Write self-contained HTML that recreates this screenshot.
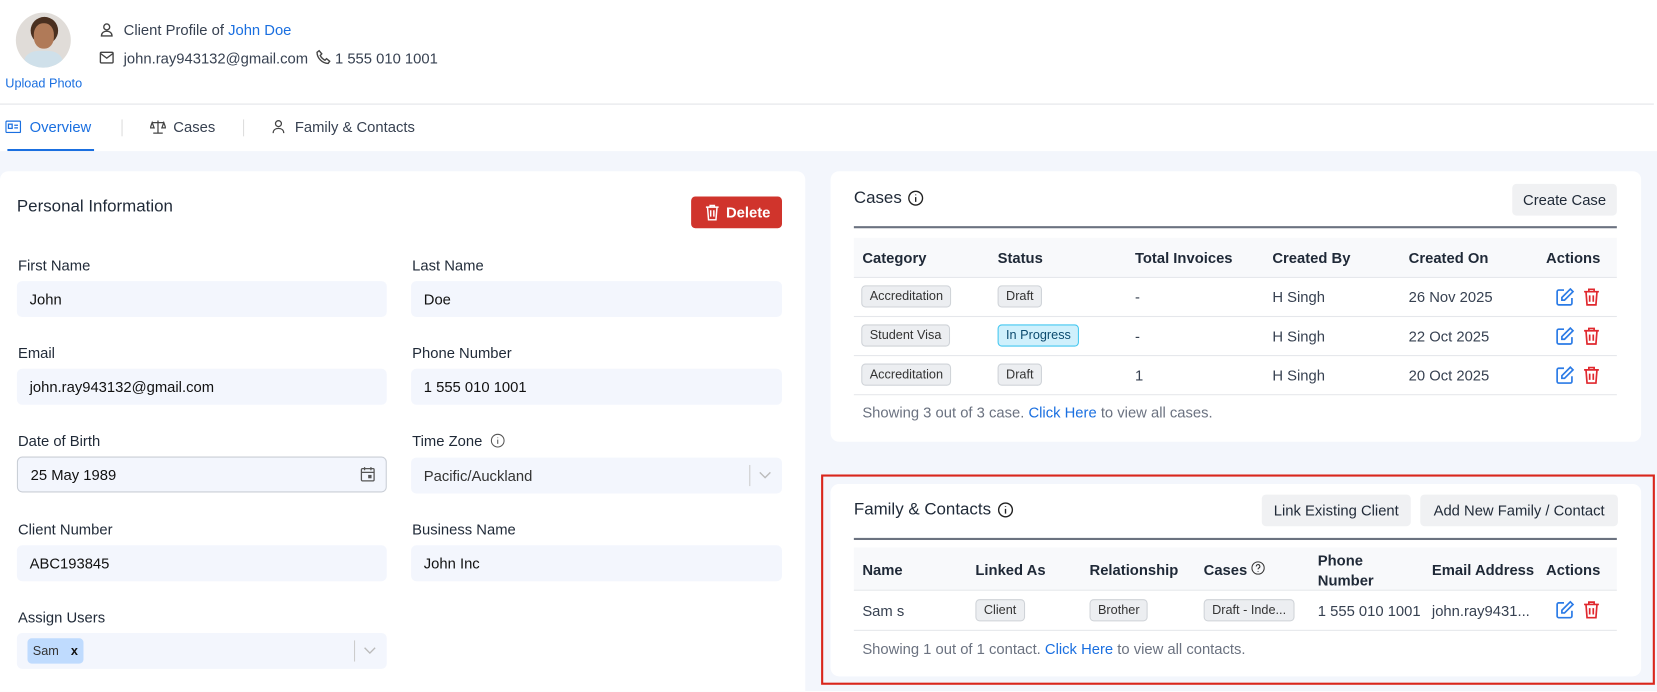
<!DOCTYPE html>
<html><head><meta charset="utf-8"><style>
*{box-sizing:border-box;margin:0;padding:0}
html,body{width:1657px;height:692px;overflow:hidden;background:#fff}
#root{position:absolute;left:0;top:0;width:1568px;height:654px;overflow:hidden;transform:scale(1.05676);transform-origin:0 0;font-family:"Liberation Sans",sans-serif;color:#1f2937;font-size:14px}
.abs{position:absolute}
.bg{position:absolute;left:0;top:143px;width:1568px;height:520px;background:#f3f6fc}
.card{position:absolute;background:#fff;border-radius:8px}
.lbl{position:absolute;font-size:14px;color:#1f2937}
.inp{position:absolute;width:350px;height:34px;background:#f3f6fd;border-radius:5px;font-size:14px;padding:0 12px;line-height:34px;color:#111}
.btn{position:absolute;background:#f0f1f3;border-radius:4px;font-size:14px;color:#1f2937;text-align:center}
.th{position:absolute;font-size:14px;font-weight:bold;color:#1f2937}
.td{position:absolute;font-size:14px;color:#374151}
.tag{position:absolute;font-size:12px;background:#eceef1;border:1px solid #cfd3d8;border-radius:4px;padding:0 7px;height:21px;line-height:19px;color:#333}
.hr{position:absolute;height:1px;background:#e5e7eb}
a{color:#1a6fe0;text-decoration:none}
</style></head><body><div id="root">
<div class="abs" style="left:15px;top:12px;width:52px;height:52px;border-radius:50%;background:#e0dcd8;overflow:hidden">
<div class="abs" style="left:14px;top:4px;width:26px;height:26px;border-radius:50%;background:#4a3020"></div>
<div class="abs" style="left:17px;top:10px;width:19px;height:24px;border-radius:45%;background:#b07a58"></div>
<div class="abs" style="left:8px;top:36px;width:36px;height:24px;border-radius:40%;background:#cfe0ea"></div>
</div>
<div class="abs" style="left:5px;top:72px;font-size:12px;color:#1a6fe0">Upload Photo</div>
<svg class="abs" style="left:94px;top:21px" width="14" height="14" viewBox="0 0 14 14" fill="none" stroke="#444" stroke-width="1.3"><circle cx="7" cy="4.5" r="2.8"/><path d="M2 13c0-3 2.3-4.5 5-4.5s5 1.5 5 4.5z"/></svg>
<div class="abs" style="left:117px;top:20px;font-size:14px;color:#374151">Client Profile of <a>John Doe</a></div>
<svg class="abs" style="left:94px;top:48px" width="14" height="13" viewBox="0 0 14 13" fill="none" stroke="#444" stroke-width="1.3"><rect x="1" y="1.5" width="12" height="10" rx="1"/><path d="M1 2.5l6 4.5 6-4.5"/></svg>
<div class="abs" style="left:117px;top:47px;font-size:14px;color:#374151">john.ray943132@gmail.com</div>
<svg class="abs" style="left:299px;top:47px" width="14" height="14" viewBox="0 0 14 14" fill="none" stroke="#444" stroke-width="1.3"><path d="M3 1l2.5 3-1.5 1.5c1 2 2.5 3.5 4.5 4.5L10 8.5l3 2.5-1.5 2C6 13 1 8 1 2.5z"/></svg>
<div class="abs" style="left:317px;top:47px;font-size:14px;color:#374151">1 555 010 1001</div>
<div class="hr" style="left:0;top:98px;width:1565px;background:#e2e4e8"></div>
<svg class="abs" style="left:5px;top:114px" width="15" height="12" viewBox="0 0 15 12" fill="none" stroke="#1a6fe0" stroke-width="1.2"><rect x="0.6" y="0.6" width="13.8" height="10.8" rx="1"/><rect x="3" y="3.5" width="3.5" height="4"/><path d="M8.5 4.5h3.5M8.5 7h3.5"/></svg>
<div class="abs" style="left:28px;top:112px;font-size:14px;color:#1a6fe0">Overview</div>
<div class="abs" style="left:7px;top:141px;width:82px;height:2px;background:#1a6fe0"></div>
<div class="abs" style="left:115px;top:113px;width:1px;height:16px;background:#ddd"></div>
<svg class="abs" style="left:142px;top:113px" width="15" height="14" viewBox="0 0 15 14" fill="none" stroke="#444" stroke-width="1.2"><path d="M7.5 1v12M3 13h9M2 3h11M2 3l-1.8 5h3.6zM13 3l-1.8 5h3.6z"/></svg>
<div class="abs" style="left:164px;top:112px;font-size:14px;color:#374151">Cases</div>
<div class="abs" style="left:230px;top:113px;width:1px;height:16px;background:#ddd"></div>
<svg class="abs" style="left:257px;top:113px" width="13" height="14" viewBox="0 0 13 14" fill="none" stroke="#444" stroke-width="1.2"><circle cx="6.5" cy="4" r="2.8"/><path d="M1.5 13c0-3 2.2-4.5 5-4.5s5 1.5 5 4.5"/></svg>
<div class="abs" style="left:279px;top:112px;font-size:14px;color:#374151">Family &amp; Contacts</div>
<div class="bg"></div>
<div class="card" style="left:0;top:162px;width:762px;height:520px"></div>
<div class="abs" style="left:16px;top:187px;font-size:16px;color:#1f2937">Personal Information</div>
<div class="abs" style="left:654px;top:186px;width:86px;height:30px;background:#d0342c;border-radius:4px;color:#fff;font-weight:bold;font-size:14px;line-height:30px;padding-left:33px">Delete</div>
<svg class="abs" style="left:667px;top:193px" width="14" height="16" viewBox="0 0 14 16" fill="none" stroke="#fff" stroke-width="1.4"><path d="M1 3h12M5 3V1.5h4V3M2.5 3l1 12h7l1-12M5.5 6v6M8.5 6v6"/></svg>
<div class="lbl" style="left:17px;top:243px">First Name</div><div class="inp" style="left:16px;top:266px">John</div>
<div class="lbl" style="left:390px;top:243px">Last Name</div><div class="inp" style="left:389px;top:266px;width:351px">Doe</div>
<div class="lbl" style="left:17px;top:326px">Email</div><div class="inp" style="left:16px;top:349px">john.ray943132@gmail.com</div>
<div class="lbl" style="left:390px;top:326px">Phone Number</div><div class="inp" style="left:389px;top:349px;width:351px">1 555 010 1001</div>
<div class="lbl" style="left:17px;top:409px">Date of Birth</div><div class="inp" style="left:16px;top:432px;border:1px solid #c9ced6;line-height:32px">25 May 1989</div>
<svg class="abs" style="left:341px;top:441px" width="14" height="15" viewBox="0 0 14 15" fill="none" stroke="#555" stroke-width="1.2"><rect x="1" y="2.5" width="12" height="11.5" rx="1"/><path d="M1 6h12M4 1v3M10 1v3"/><rect x="8" y="9" width="2" height="2" fill="#555"/></svg>
<div class="lbl" style="left:390px;top:409px">Time Zone</div>
<svg class="abs" style="left:464px;top:410px" width="14" height="14" viewBox="0 0 14 14" fill="none" stroke="#555" stroke-width="1"><circle cx="7" cy="7" r="6"/><path d="M7 6v4M7 4v0.6"/></svg>
<div class="inp" style="left:389px;top:433px;width:351px;color:#333">Pacific/Auckland</div>
<div class="abs" style="left:709px;top:440px;width:1px;height:20px;background:#ccc"></div>
<svg class="abs" style="left:718px;top:446px" width="12" height="8" viewBox="0 0 12 8" fill="none" stroke="#bbb" stroke-width="1.3"><path d="M1 1l5 5 5-5"/></svg>
<div class="lbl" style="left:17px;top:493px">Client Number</div><div class="inp" style="left:16px;top:516px">ABC193845</div>
<div class="lbl" style="left:390px;top:493px">Business Name</div><div class="inp" style="left:389px;top:516px;width:351px">John Inc</div>
<div class="lbl" style="left:17px;top:576px">Assign Users</div><div class="inp" style="left:16px;top:599px"></div>
<div class="abs" style="left:26px;top:604px;width:53px;height:24px;background:#bfdbfe;border-radius:4px;font-size:12px;line-height:24px;padding-left:5px;color:#333">Sam <b style="margin-left:8px;color:#111">x</b></div>
<div class="abs" style="left:335px;top:606px;width:1px;height:20px;background:#ccc"></div>
<svg class="abs" style="left:344px;top:612px" width="12" height="8" viewBox="0 0 12 8" fill="none" stroke="#bbb" stroke-width="1.3"><path d="M1 1l5 5 5-5"/></svg>

<div class="card" style="left:786px;top:162px;width:767px;height:256px"></div>
<div class="abs" style="left:808px;top:179px;font-size:16px">Cases</div>
<svg class="abs" style="left:859px;top:180px" width="15" height="15" viewBox="0 0 15 15" fill="none" stroke="#222" stroke-width="1.3"><circle cx="7.5" cy="7.5" r="6.5"/><path d="M7.5 6.5v4.5M7.5 4v0.8"/></svg>
<div class="btn" style="left:1431px;top:174px;width:99px;height:30px;line-height:30px">Create Case</div>
<div class="abs" style="left:808px;top:214px;width:722px;height:2px;background:#6b7280"></div>
<div class="abs" style="left:808px;top:225px;width:722px;height:37px;background:#f8f9fb"></div>
<div class="th" style="left:816px;top:236px">Category</div><div class="th" style="left:944px;top:236px">Status</div><div class="th" style="left:1074px;top:236px">Total Invoices</div><div class="th" style="left:1204px;top:236px">Created By</div><div class="th" style="left:1333px;top:236px">Created On</div><div class="th" style="left:1463px;top:236px">Actions</div>
<div class="hr" style="left:808px;top:262px;width:722px"></div>
<div class="hr" style="left:808px;top:299px;width:722px"></div>
<div class="hr" style="left:808px;top:336px;width:722px"></div>
<div class="hr" style="left:808px;top:373px;width:722px"></div>
<div class="tag" style="left:815px;top:270px">Accreditation</div><div class="tag" style="left:944px;top:270px">Draft</div><div class="td" style="left:1074px;top:273px">-</div><div class="td" style="left:1204px;top:273px">H Singh</div><div class="td" style="left:1333px;top:273px">26 Nov 2025</div>
<div class="tag" style="left:815px;top:307px">Student Visa</div><div class="tag" style="left:944px;top:307px;background:#cff0fc;border-color:#43c7f0;color:#0b4a6e">In Progress</div><div class="td" style="left:1074px;top:310px">-</div><div class="td" style="left:1204px;top:310px">H Singh</div><div class="td" style="left:1333px;top:310px">22 Oct 2025</div>
<div class="tag" style="left:815px;top:344px">Accreditation</div><div class="tag" style="left:944px;top:344px">Draft</div><div class="td" style="left:1074px;top:347px">1</div><div class="td" style="left:1204px;top:347px">H Singh</div><div class="td" style="left:1333px;top:347px">20 Oct 2025</div>
<div class="td" style="left:816px;top:382px;color:#6b7280">Showing 3 out of 3 case. <a>Click Here</a> to view all cases.</div>

<div class="abs" style="left:777px;top:449px;width:789px;height:199px;border:2px solid #d9261c"></div>
<div class="card" style="left:786px;top:458px;width:767px;height:182px"></div>
<div class="abs" style="left:808px;top:474px;font-size:16px">Family &amp; Contacts</div>
<svg class="abs" style="left:944px;top:475px" width="15" height="15" viewBox="0 0 15 15" fill="none" stroke="#222" stroke-width="1.3"><circle cx="7.5" cy="7.5" r="6.5"/><path d="M7.5 6.5v4.5M7.5 4v0.8"/></svg>
<div class="btn" style="left:1194px;top:468px;width:141px;height:30px;line-height:30px">Link Existing Client</div>
<div class="btn" style="left:1344px;top:468px;width:187px;height:30px;line-height:30px">Add New Family / Contact</div>
<div class="abs" style="left:808px;top:509px;width:722px;height:2px;background:#6b7280"></div>
<div class="abs" style="left:808px;top:518px;width:722px;height:40px;background:#f8f9fb"></div>
<div class="th" style="left:816px;top:531px">Name</div><div class="th" style="left:923px;top:531px">Linked As</div><div class="th" style="left:1031px;top:531px">Relationship</div><div class="th" style="left:1139px;top:531px">Cases</div>
<svg class="abs" style="left:1184px;top:531px" width="13" height="13" viewBox="0 0 13 13" fill="none" stroke="#333" stroke-width="1"><circle cx="6.5" cy="6.5" r="5.8"/><path d="M4.8 5a1.7 1.7 0 1 1 2.4 1.5c-.6.3-.7.7-.7 1.3M6.5 9.5v.6"/></svg>
<div class="th" style="left:1247px;top:521px;line-height:19px">Phone<br>Number</div><div class="th" style="left:1355px;top:531px">Email Address</div><div class="th" style="left:1463px;top:531px">Actions</div>
<div class="hr" style="left:808px;top:558px;width:722px"></div>
<div class="hr" style="left:808px;top:596px;width:722px"></div>
<div class="td" style="left:816px;top:570px">Sam s</div><div class="tag" style="left:923px;top:567px">Client</div><div class="tag" style="left:1031px;top:567px">Brother</div><div class="tag" style="left:1139px;top:567px">Draft - Inde...</div><div class="td" style="left:1247px;top:570px">1 555 010 1001</div><div class="td" style="left:1355px;top:570px">john.ray9431...</div>
<div class="td" style="left:816px;top:606px;color:#6b7280">Showing 1 out of 1 contact. <a>Click Here</a> to view all contacts.</div>

<svg width="0" height="0" style="position:absolute"><defs>
<symbol id="ed" viewBox="0 0 18 18"><path d="M8 2.5H3a1.5 1.5 0 0 0-1.5 1.5v11A1.5 1.5 0 0 0 3 16.5h11a1.5 1.5 0 0 0 1.5-1.5v-5" fill="none" stroke="#2b7be6" stroke-width="1.6"/><path d="M14 1.5l2.5 2.5-8 8H6v-2.5z" fill="none" stroke="#2b7be6" stroke-width="1.6"/></symbol>
<symbol id="tr" viewBox="0 0 16 18"><path d="M1 4h14M5.5 4V1.8h5V4M2.8 4l1 12.5h8.4l1-12.5M6.3 7.5v6M9.7 7.5v6" fill="none" stroke="#e0282e" stroke-width="1.6"/></symbol></defs></svg>
<svg class="abs" style="left:1472px;top:272px" width="18" height="18"><use href="#ed"/></svg><svg class="abs" style="left:1498px;top:272px" width="16" height="18"><use href="#tr"/></svg>
<svg class="abs" style="left:1472px;top:309px" width="18" height="18"><use href="#ed"/></svg><svg class="abs" style="left:1498px;top:309px" width="16" height="18"><use href="#tr"/></svg>
<svg class="abs" style="left:1472px;top:346px" width="18" height="18"><use href="#ed"/></svg><svg class="abs" style="left:1498px;top:346px" width="16" height="18"><use href="#tr"/></svg>
<svg class="abs" style="left:1472px;top:568px" width="18" height="18"><use href="#ed"/></svg><svg class="abs" style="left:1498px;top:568px" width="16" height="18"><use href="#tr"/></svg>
</div></body></html>
